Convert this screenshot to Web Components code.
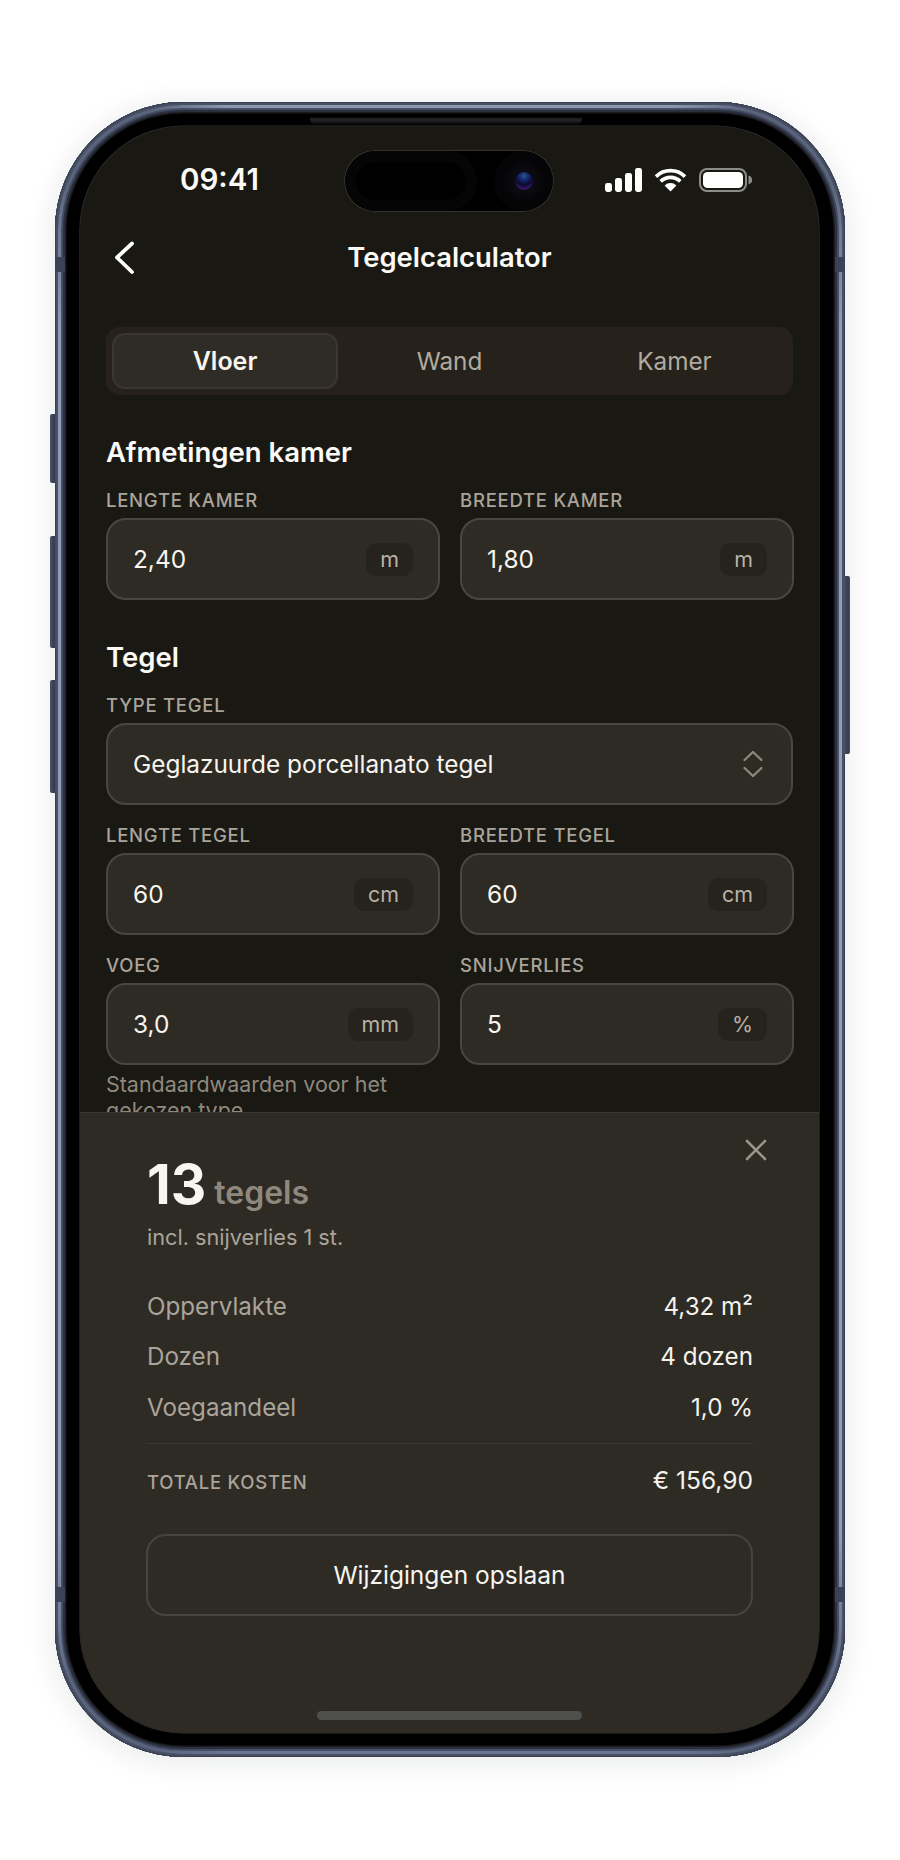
<!DOCTYPE html>
<html lang="nl">
<head>
<meta charset="utf-8">
<title>Tegelcalculator</title>
<style>
  html, body { margin: 0; background: #fff; }
  body {
    box-sizing: border-box;
    height: 1860px;
    padding: 102px 55px 103px;
    font-family: "Inter", "Liberation Sans", sans-serif;
    color: #f5f2ec;
  }
</style>
</head>
<body>
<phone-frame>
  <status-bar time="09:41"></status-bar>
  <nav-bar title="Tegelcalculator"></nav-bar>
  <calc-form>
    <seg-control active="0" items="Vloer,Wand,Kamer"></seg-control>
    <section-title style="margin-top:40px">Afmetingen kamer</section-title>
    <field-row style="margin-top:20px">
      <num-field label="LENGTE KAMER" value="2,40" unit="m"></num-field>
      <num-field label="BREEDTE KAMER" value="1,80" unit="m"></num-field>
    </field-row>
    <section-title style="margin-top:40px">Tegel</section-title>
    <select-field style="margin-top:20px" label="TYPE TEGEL" value="Geglazuurde porcellanato tegel"></select-field>
    <field-row style="margin-top:19px">
      <num-field label="LENGTE TEGEL" value="60" unit="cm"></num-field>
      <num-field label="BREEDTE TEGEL" value="60" unit="cm"></num-field>
    </field-row>
    <field-row style="margin-top:19px">
      <num-field label="VOEG" value="3,0" unit="mm">
        <span slot="hint">Standaardwaarden voor het gekozen type</span>
      </num-field>
      <num-field label="SNIJVERLIES" value="5" unit="%"></num-field>
    </field-row>
  </calc-form>
  <result-sheet count="13" noun="tegels" sub="incl. snijverlies 1 st.">
    <result-row label="Oppervlakte" value="4,32 m²"></result-row>
    <result-row label="Dozen" value="4 dozen"></result-row>
    <result-row label="Voegaandeel" value="1,0 %"></result-row>
  </result-sheet>
</phone-frame>

<script>
const FONT = '"Inter", "Liberation Sans", sans-serif';

class PhoneFrame extends HTMLElement {
  constructor() {
    super();
    this.attachShadow({ mode: 'open' });
    this.shadowRoot.innerHTML = `
      <style>
        :host {
          display: block;
          position: relative;
          box-sizing: border-box;
          width: 790px;
          height: 1655px;
          padding: 24px 26px 24px 25px;
          border-radius: 128px;
          background: #000;
          box-shadow:
            inset 0 0 0 1px #3a4052,
            inset 0 0 0 3.5px #485066,
            inset 0 0 0 6.5px #4f586f,
            inset 0 0 0 8px #434b60,
            inset 0 0 0 10px #2a3040,
            inset 0 0 0 11.5px #1b1b1d,
            inset 0 0 5px 13px #000,
            0 4px 30px rgba(20, 24, 40, .11);
        }
        /* thin bright line on the metal, dimmer round the corners */
        .shine {
          position: absolute;
          inset: 3px;
          padding: 3px;
          border-radius: 125px;
          background: conic-gradient(#8e98b0 0 15deg, #5a647c 20deg 27deg, #939db6 33deg 147deg, #5a647c 153deg 160deg, #6a7490 165deg 195deg, #5a647c 200deg 207deg, #939db6 213deg 327deg, #5a647c 333deg 340deg, #8e98b0 345deg);
          -webkit-mask: linear-gradient(#000 0 0) content-box, linear-gradient(#000 0 0);
          -webkit-mask-composite: xor;
          mask-composite: exclude;
        }
        .screen {
          position: relative;
          display: flex;
          flex-direction: column;
          height: 100%;
          border-radius: 104px;
          overflow: hidden;
          background: #191813;
          box-shadow: 0 0 0 .6px rgba(255, 255, 255, .2);
        }
        .btn {
          position: absolute;
          width: 6px;
          background: linear-gradient(90deg, #4a5268, #343b4e 70%, #485066);
        }
        .btn.l { left: -5px; border-radius: 2px 0 0 2px; }
        .btn.r { right: -5px; border-radius: 0 2px 2px 0; }
        .band { position: absolute; background: #3a4257; width: 10px; height: 15px; }
        .speaker {
          position: absolute;
          left: 255px;
          top: 15px;
          width: 272px;
          height: 8px;
          border-radius: 0 0 6px 6px;
          background: linear-gradient(180deg, #000 0, #242424 25%, #1f1f1f 50%, #000 100%);
        }
      </style>
      <div class="shine"></div>
      <div class="btn l" style="top:312px;height:69px"></div>
      <div class="btn l" style="top:434px;height:112px"></div>
      <div class="btn l" style="top:578px;height:113px"></div>
      <div class="btn r" style="top:474px;height:178px"></div>
      <div class="band" style="left:0;top:155px"></div>
      <div class="band" style="right:0;top:155px"></div>
      <div class="band" style="left:0;top:1485px"></div>
      <div class="band" style="right:0;top:1485px"></div>
      <div class="speaker"></div>
      <div class="screen"><slot></slot></div>
    `;
  }
}

class StatusBar extends HTMLElement {
  constructor() {
    super();
    this.attachShadow({ mode: 'open' });
  }

  connectedCallback() {
    this.shadowRoot.innerHTML = `
      <style>
        :host {
          display: flex;
          align-items: flex-start;
          box-sizing: border-box;
          flex: none;
          height: 96px;
          padding: 25px 66px 0 100px;
          font-family: ${FONT};
        }
        .time {
          width: 165px;
          font-size: 29.5px;
          line-height: 56px;
          font-weight: 600;
          color: #fbfaf6;
        }
        .island {
          position: relative;
          flex: none;
          width: 208px;
          height: 60px;
          border-radius: 30px;
          background: #000;
          box-shadow: 0 0 0 .6px rgba(255, 255, 255, .22);
          overflow: hidden;
        }
        .pill {
          position: absolute;
          left: 0;
          top: 0;
          width: 132px;
          height: 60px;
          border-radius: 30px;
          background: #050505;
        }
        .pill::after {
          content: "";
          position: absolute;
          left: 11px;
          top: 11px;
          width: 110px;
          height: 38px;
          border-radius: 19px;
          background: #000;
        }
        .cam {
          position: absolute;
          left: 149px;
          top: 0;
          width: 60px;
          height: 60px;
          border-radius: 50%;
          background: radial-gradient(circle, #0c0c14 0, #0a0a10 26%, #050507 52%, #040404 100%);
        }
        .lens {
          position: absolute;
          left: 21px;
          top: 21px;
          width: 18px;
          height: 18px;
          border-radius: 50%;
          background: radial-gradient(circle at 50% 22%, #2a5a80 0, #182a78 24%, #0c0a2a 52%, #3a1a70 82%, #120a28 100%);
        }
        .icons {
          display: flex;
          align-items: center;
          gap: 12px;
          height: 58px;
          margin-left: 52px;
        }
        svg { display: block; }
      </style>
      <div class="time">${this.getAttribute('time')}</div>
      <div class="island"><div class="pill"></div><div class="cam"><div class="lens"></div></div></div>
      <div class="icons">
        <svg width="37" height="24" viewBox="0 0 37 24" fill="#fff">
          <rect x="0" y="15" width="7" height="9" rx="2.4"/>
          <rect x="10" y="10" width="7" height="14" rx="2.4"/>
          <rect x="20" y="5" width="7" height="19" rx="2.4"/>
          <rect x="30" y="0" width="7" height="24" rx="2.4"/>
        </svg>
        <svg width="33" height="24" viewBox="0 0 33 24">
          <path d="M16.5 23.5 L10.6 17.4 A8.4 8.4 0 0 1 22.4 17.4 Z" fill="#fff"/>
          <path d="M6.7 13.4 A13.9 13.9 0 0 1 26.3 13.4" fill="none" stroke="#fff" stroke-width="3.6"/>
          <path d="M2 8.6 A20.6 20.6 0 0 1 31 8.6" fill="none" stroke="#fff" stroke-width="3.6"/>
        </svg>
        <svg width="53" height="24" viewBox="0 0 53 24">
          <rect x="1" y="1" width="46" height="22" rx="7" fill="none" stroke="#8c8c8a" stroke-width="2"/>
          <rect x="4" y="4" width="40" height="16" rx="4.6" fill="#fff"/>
          <path d="M49.5 7.5 A4.6 4.6 0 0 1 49.5 16.5 Z" fill="#8c8c8a"/>
        </svg>
      </div>
    `;
  }
}

class NavBar extends HTMLElement {
  constructor() {
    super();
    this.attachShadow({ mode: 'open' });
  }

  connectedCallback() {
    this.shadowRoot.innerHTML = `
      <style>
        :host {
          display: flex;
          align-items: center;
          justify-content: center;
          position: relative;
          flex: none;
          height: 70px;
          font-family: ${FONT};
        }
        .back {
          position: absolute;
          left: 33px;
          top: 18px;
          display: block;
        }
        .title {
          font-size: 27.4px;
          font-weight: 600;
          color: #fbfaf6;
        }
      </style>
      <svg class="back" width="24" height="36" viewBox="0 0 24 36" fill="none">
        <path d="M19 3.5 L4 17.5 L19 32" stroke="#fff" stroke-width="3.8" stroke-linecap="round" stroke-linejoin="round"/>
      </svg>
      <span class="title">${this.getAttribute('title')}</span>
    `;
  }
}

class CalcForm extends HTMLElement {
  constructor() {
    super();
    this.attachShadow({ mode: 'open' });
    this.shadowRoot.innerHTML = `
      <style>
        :host {
          display: block;
          flex: 1 1 0;
          min-height: 0;
          overflow: hidden;
          padding: 35px 26px 0;
        }
      </style>
      <slot></slot>
    `;
  }
}

class SegControl extends HTMLElement {
  constructor() {
    super();
    this.attachShadow({ mode: 'open' });
  }

  connectedCallback() {
    const active = Number(this.getAttribute('active'));
    const items = this.getAttribute('items').split(',');
    this.shadowRoot.innerHTML = `
      <style>
        :host {
          display: grid;
          grid-template-columns: repeat(3, 1fr);
          box-sizing: border-box;
          height: 68px;
          padding: 6px;
          border-radius: 14px;
          background: #26221b;
          font-family: ${FONT};
        }
        .seg {
          display: flex;
          align-items: center;
          justify-content: center;
          box-sizing: border-box;
          border: 2px solid transparent;
          border-radius: 13px;
          font-size: 24.3px;
          color: #b1ab9f;
        }
        .seg.on {
          margin-right: -1px;
          background: #2f2c26;
          border-color: #3a3730;
          font-size: 25px;
          font-weight: 600;
          color: #f8f5ef;
        }
      </style>
      ${items.map((t, i) => `<div class="seg ${i === active ? 'on' : ''}">${t}</div>`).join('')}
    `;
  }
}

class SectionTitle extends HTMLElement {
  constructor() {
    super();
    this.attachShadow({ mode: 'open' });
    this.shadowRoot.innerHTML = `
      <style>
        :host {
          display: block;
          font-family: ${FONT};
          font-size: 27.5px;
          line-height: 34px;
          font-weight: 600;
          color: #fbfaf6;
        }
      </style>
      <slot></slot>
    `;
  }
}

class FieldRow extends HTMLElement {
  constructor() {
    super();
    this.attachShadow({ mode: 'open' });
    this.shadowRoot.innerHTML = `
      <style>
        :host {
          display: grid;
          grid-template-columns: 334px 334px;
          column-gap: 20px;
          margin-right: -1px;
          align-items: start;
        }
      </style>
      <slot></slot>
    `;
  }
}

const FIELD_CSS = `
  .label {
    height: 22px;
    margin-bottom: 7px;
    font-size: 18.5px;
    line-height: 22px;
    font-weight: 500;
    letter-spacing: .75px;
    color: #aaa49a;
  }
  .box {
    display: flex;
    align-items: center;
    justify-content: space-between;
    box-sizing: border-box;
    height: 82px;
    padding: 0 25px;
    border: 2px solid #4a463f;
    border-radius: 20px;
    background: #2e2b25;
    font-size: 24.4px;
    color: #f8f5ef;
  }
`;

class NumField extends HTMLElement {
  constructor() {
    super();
    this.attachShadow({ mode: 'open' });
  }

  connectedCallback() {
    this.shadowRoot.innerHTML = `
      <style>
        :host { display: block; min-width: 0; font-family: ${FONT}; }
        ${FIELD_CSS}
        .unit {
          display: flex;
          align-items: center;
          justify-content: center;
          box-sizing: border-box;
          min-width: 47px;
          height: 33px;
          padding: 0 14px;
          border-radius: 10px;
          background: #26221c;
          font-size: 21.4px;
          color: #b8b2a6;
        }
        .hint {
          margin-top: 6px;
          font-size: 21.45px;
          line-height: 26px;
          color: #8f897d;
        }
        ::slotted([slot=hint]) { display: block; }
      </style>
      <div class="label">${this.getAttribute('label')}</div>
      <div class="box">
        <span>${this.getAttribute('value')}</span>
        <span class="unit">${this.getAttribute('unit')}</span>
      </div>
      <div class="hint"><slot name="hint"></slot></div>
    `;
    if (!this.querySelector('[slot=hint]')) this.shadowRoot.querySelector('.hint').remove();
  }
}

class SelectField extends HTMLElement {
  constructor() {
    super();
    this.attachShadow({ mode: 'open' });
  }

  connectedCallback() {
    this.shadowRoot.innerHTML = `
      <style>
        :host { display: block; font-family: ${FONT}; }
        ${FIELD_CSS}
        svg { display: block; margin-right: 2px; }
      </style>
      <div class="label">${this.getAttribute('label')}</div>
      <div class="box">
        <span>${this.getAttribute('value')}</span>
        <svg width="22" height="30" viewBox="0 0 22 30" fill="none" stroke="#8f897d" stroke-width="2.3" stroke-linecap="round" stroke-linejoin="round">
          <path d="M2.5 11 L11 3 L19.5 11"/>
          <path d="M2.5 19 L11 27 L19.5 19"/>
        </svg>
      </div>
    `;
  }
}

class ResultSheet extends HTMLElement {
  constructor() {
    super();
    this.attachShadow({ mode: 'open' });
  }

  connectedCallback() {
    this.shadowRoot.innerHTML = `
      <style>
        :host {
          display: block;
          position: relative;
          box-sizing: border-box;
          flex: none;
          height: 621px;
          padding: 40px 66px 0 66px;
          border-top: 1.5px solid #3a3730;
          background: #2e2b25;
          font-family: ${FONT};
        }
        .close {
          position: absolute;
          right: 52px;
          top: 26px;
          display: block;
        }
        .head { display: flex; align-items: baseline; gap: 8px; height: 62px; line-height: 62px; padding-left: 1px; }
        .count { font-size: 55px; font-weight: 700; color: #f9f6f0; }
        .noun { font-size: 32px; font-weight: 600; color: #8f897d; }
        .sub {
          margin-top: 8px;
          padding-left: 1px;
          font-size: 21.7px;
          line-height: 28px;
          color: #aaa49a;
        }
        .rows { display: flex; flex-direction: column; margin-top: 30px; }
        .total {
          display: flex;
          align-items: center;
          justify-content: space-between;
          height: 74px;
          margin-top: 10px;
          border-top: 1.5px solid #3a3730;
        }
        .total .k { font-size: 18.5px; font-weight: 500; letter-spacing: .75px; color: #aaa49a; padding: 2px 0 0 1px; }
        .total .v { font-size: 24.6px; color: #f5f2ec; padding-bottom: 2px; }
        button {
          display: block;
          box-sizing: border-box;
          width: 100%;
          height: 82px;
          margin-top: 16px;
          border: 2px solid #48443d;
          border-radius: 20px;
          background: transparent;
          font: 400 24.5px ${FONT};
          color: #f8f5ef;
        }
        .home {
          position: absolute;
          left: 237px;
          bottom: 13px;
          width: 265px;
          height: 9px;
          border-radius: 5px;
          background: #4e4e4c;
        }
      </style>
      <svg class="close" width="22" height="22" viewBox="0 0 22 22" fill="none" stroke="#9a9488" stroke-width="2.6" stroke-linecap="round">
        <path d="M2 2 L20 20"/><path d="M20 2 L2 20"/>
      </svg>
      <div class="head">
        <span class="count">${this.getAttribute('count')}</span>
        <span class="noun">${this.getAttribute('noun')}</span>
      </div>
      <div class="sub">${this.getAttribute('sub')}</div>
      <div class="rows"><slot></slot></div>
      <div class="total"><span class="k">TOTALE KOSTEN</span><span class="v">€ 156,90</span></div>
      <button>Wijzigingen opslaan</button>
      <div class="home"></div>
    `;
  }
}

class ResultRow extends HTMLElement {
  constructor() {
    super();
    this.attachShadow({ mode: 'open' });
  }

  connectedCallback() {
    this.shadowRoot.innerHTML = `
      <style>
        :host {
          display: flex;
          align-items: center;
          justify-content: space-between;
          height: 50.5px;
          padding-left: 1px;
          font-size: 24.2px;
          color: #aaa49a;
        }
        .v { color: #f5f2ec; }
      </style>
      <span>${this.getAttribute('label')}</span>
      <span class="v">${this.getAttribute('value')}</span>
    `;
  }
}

customElements.define('phone-frame', PhoneFrame);
customElements.define('status-bar', StatusBar);
customElements.define('nav-bar', NavBar);
customElements.define('calc-form', CalcForm);
customElements.define('seg-control', SegControl);
customElements.define('section-title', SectionTitle);
customElements.define('field-row', FieldRow);
customElements.define('num-field', NumField);
customElements.define('select-field', SelectField);
customElements.define('result-sheet', ResultSheet);
customElements.define('result-row', ResultRow);
</script>
</body>
</html>
